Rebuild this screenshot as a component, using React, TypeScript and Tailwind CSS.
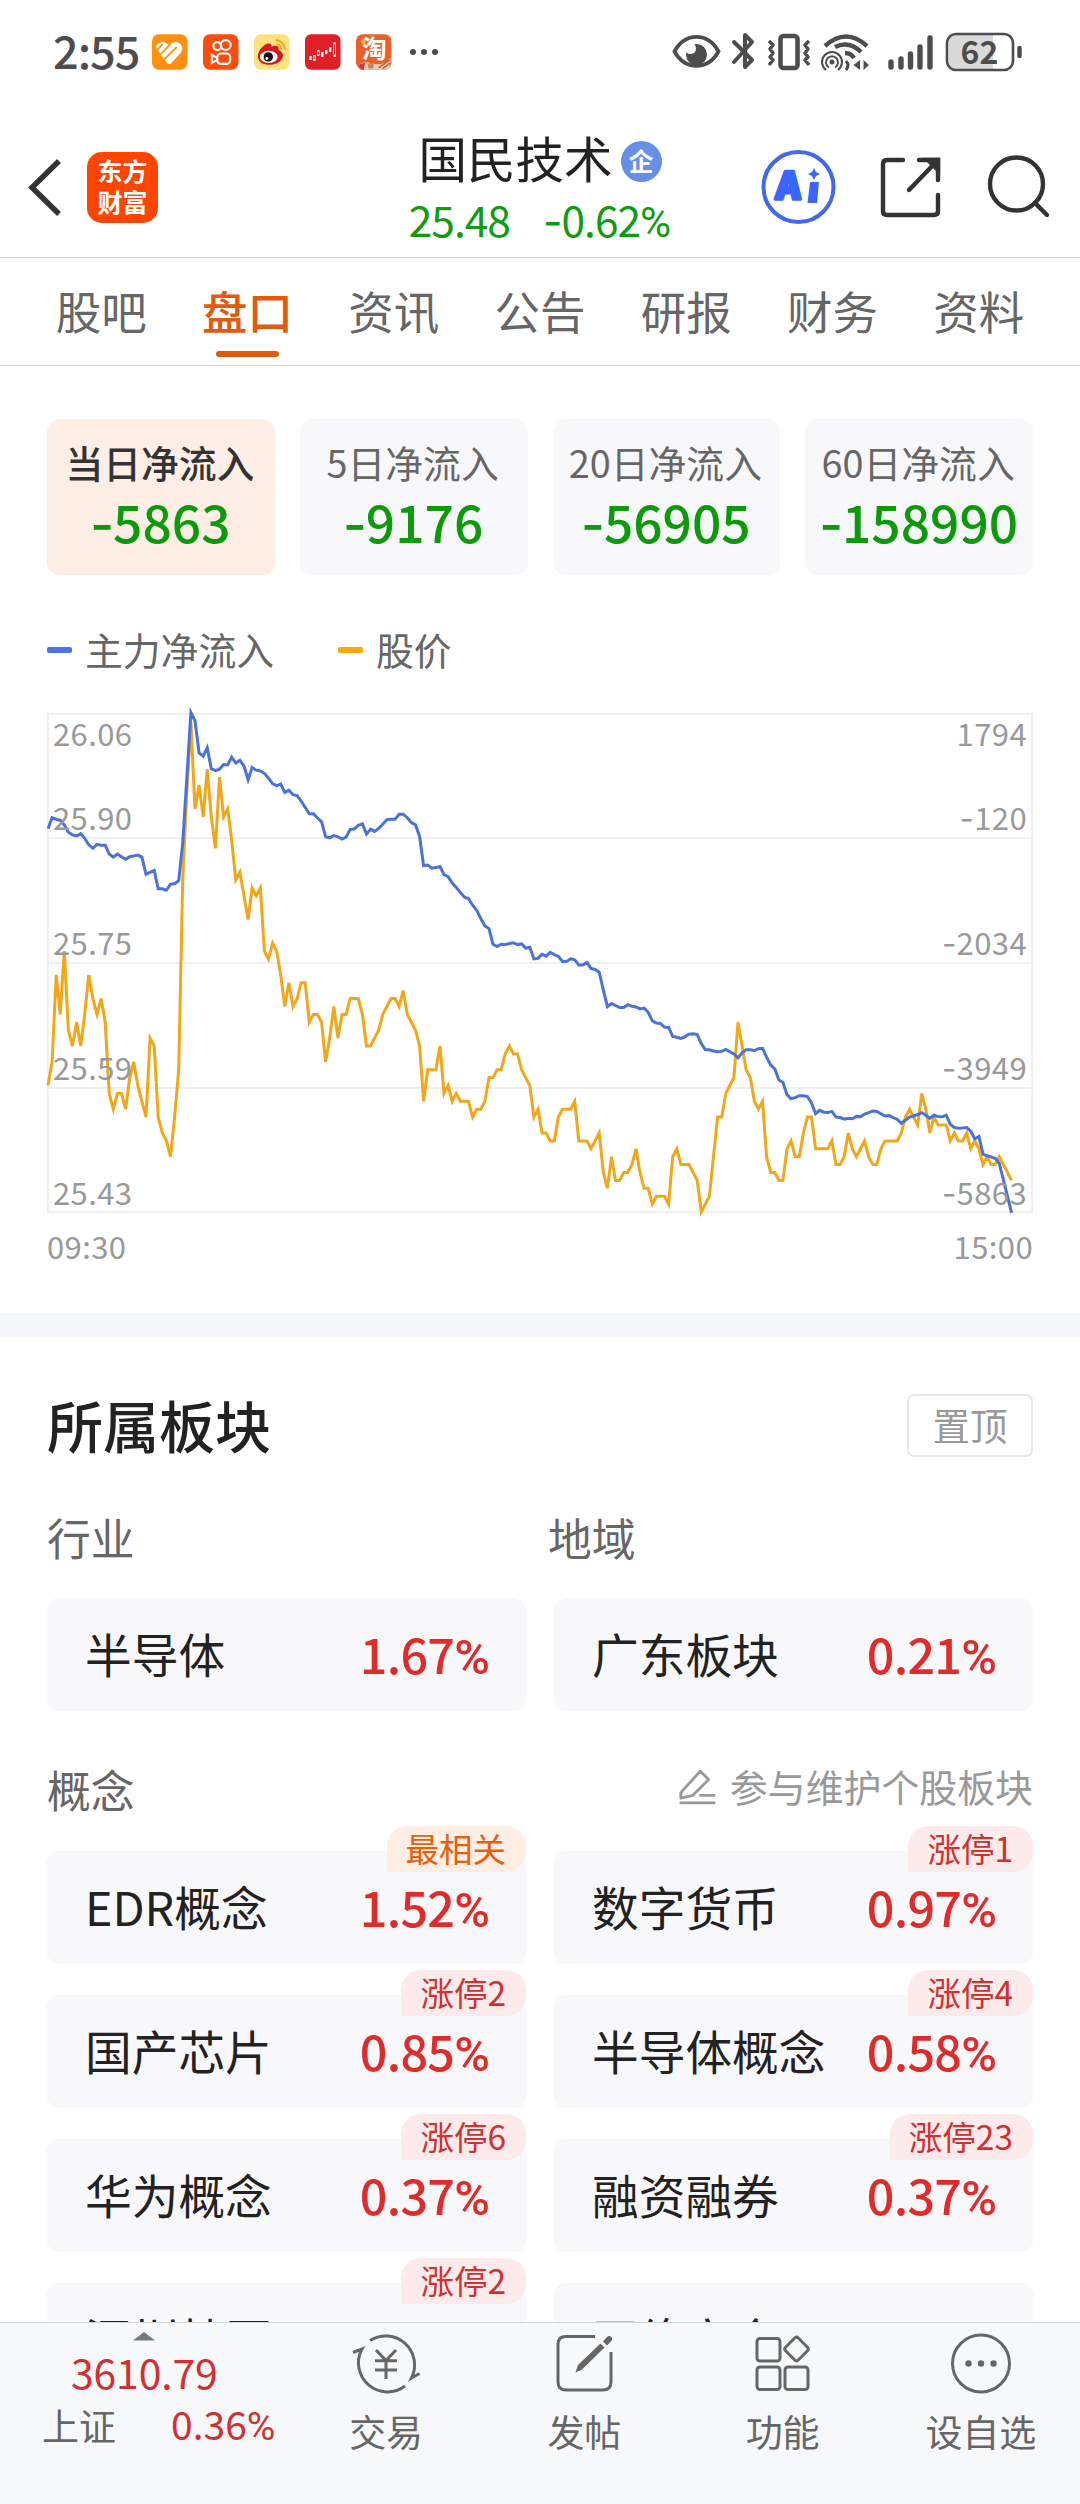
import clsx from "clsx";
import type { ReactNode } from "react";

const TABS = ["股吧", "盘口", "资讯", "公告", "研报", "财务", "资料"];
const ACTIVE_TAB = "盘口";

const FLOW_CARDS = [
  { label: "当日净流入", value: "-5863", active: true },
  { label: "5日净流入", value: "-9176" },
  { label: "20日净流入", value: "-56905" },
  { label: "60日净流入", value: "-158990" },
];

interface Sector {
  name: string;
  change?: string;
  tag?: string;
  tagTone?: "orange" | "red";
}

const CONCEPTS: Sector[] = [
  { name: "EDR概念", change: "1.52%", tag: "最相关", tagTone: "orange" },
  { name: "数字货币", change: "0.97%", tag: "涨停1" },
  { name: "国产芯片", change: "0.85%", tag: "涨停2" },
  { name: "半导体概念", change: "0.58%", tag: "涨停4" },
  { name: "华为概念", change: "0.37%", tag: "涨停6" },
  { name: "融资融券", change: "0.37%", tag: "涨停23" },
  { name: "深圳特区", tag: "涨停2" },
  { name: "网络安全" },
];

// price per minute, in 0.01 steps above 25.43
const PRICE = [
  16, 19, 30, 25, 33, 23, 21, 24, 21, 25, 30, 27, 25, 27, 24, 15, 13, 15, 15, 13,
  17, 19, 16, 14, 12, 22, 21, 12, 10, 9, 7, 12, 18, 42, 53, 62, 51, 54, 50, 56,
  50, 46, 55, 50, 51, 47, 42, 43, 40, 37, 41, 40, 41, 33, 32, 34, 33, 30, 26, 29,
  26, 27, 29, 29, 24, 25, 25, 24, 19, 22, 26, 22, 25, 25, 27, 27, 27, 25, 21, 21,
  22, 23, 25, 26, 27, 27, 26, 28, 25, 24, 23, 21, 14, 18, 18, 18, 21, 15, 16, 14,
  15, 14, 14, 14, 12, 13, 13, 14, 17, 17, 18, 18, 20, 21, 20, 20, 18, 17, 16, 12,
  13, 10, 10, 9, 9, 12, 13, 13, 13, 14, 9, 9, 9, 8, 9, 10, 5, 3, 7, 4,
  4, 5, 5, 6, 8, 5, 3, 3, 1, 2, 2, 2, 1, 7, 8, 6, 6, 6, 5, 4,
  0, 1, 2, 7, 12, 12, 15, 16, 17, 24, 21, 18, 17, 14, 13, 14, 7, 5, 5, 4,
  4, 8, 9, 7, 7, 10, 12, 12, 8, 8, 8, 8, 9, 6, 6, 7, 10, 8, 7, 8,
  9, 7, 6, 6, 8, 9, 9, 9, 9, 10, 12, 13, 12, 11, 15, 13, 10, 12, 11, 11,
  11, 9, 10, 9, 9, 10, 8, 9, 8, 6, 7, 6, 6, 7, 6, 5, 4,
];

// net inflow per minute, 62 is the top of the plot and 1364 the bottom
const FLOW_TOP = 62;
const FLOW_BOTTOM = 1364;
const FLOW = [
  362, 333, 337, 340, 352, 371, 378, 381, 375, 387, 404, 413, 403, 405, 405, 428, 436, 428, 435, 442,
  435, 433, 431, 436, 481, 476, 471, 519, 519, 523, 507, 506, 498, 400, 230, 58, 80, 164, 172, 150,
  205, 210, 206, 194, 195, 175, 190, 183, 198, 234, 202, 209, 211, 217, 230, 244, 250, 245, 267, 261,
  273, 275, 290, 306, 323, 323, 334, 344, 383, 386, 380, 383, 389, 384, 364, 363, 353, 349, 376, 363,
  369, 361, 350, 338, 337, 337, 324, 324, 333, 346, 352, 382, 459, 457, 465, 463, 461, 482, 487, 504,
  516, 529, 541, 545, 562, 575, 597, 616, 623, 664, 670, 664, 665, 662, 660, 665, 663, 674, 672, 702,
  701, 690, 695, 685, 691, 696, 709, 709, 702, 705, 718, 718, 712, 727, 730, 737, 783, 827, 819, 824,
  829, 829, 822, 826, 828, 833, 831, 842, 864, 870, 871, 881, 881, 905, 907, 910, 906, 899, 898, 900,
  924, 940, 940, 943, 945, 944, 939, 945, 951, 961, 948, 940, 940, 942, 937, 936, 959, 980, 990, 1019,
  1025, 1057, 1068, 1065, 1060, 1060, 1062, 1079, 1107, 1098, 1103, 1104, 1101, 1116, 1117, 1121, 1119, 1120, 1114, 1115,
  1108, 1104, 1100, 1101, 1107, 1113, 1112, 1117, 1122, 1132, 1124, 1116, 1113, 1109, 1104, 1111, 1119, 1111, 1114, 1115,
  1111, 1135, 1143, 1145, 1144, 1143, 1153, 1173, 1166, 1213, 1217, 1220, 1224, 1237, 1280, 1323, 1366,
];

const PLOT = { left: 48, right: 1032, top: 10, bottom: 508 };
const MINUTES = 241;

const AXIS_LABELS = [
  { y: 42, price: "26.06", flow: "1794" },
  { y: 126, price: "25.90", flow: "-120" },
  { y: 251, price: "25.75", flow: "-2034" },
  { y: 376, price: "25.59", flow: "-3949" },
  { y: 501, price: "25.43", flow: "-5863" },
];

function toPoints(values: number[], toY: (value: number) => number) {
  const step = (PLOT.right - PLOT.left) / MINUTES;
  return values
    .map((value, i) => `${(PLOT.left + i * step).toFixed(1)},${toY(value).toFixed(1)}`)
    .join(" ");
}

// the CJK face has a very short hyphen and a very wide percent sign,
// so those two are set in Inter and Roboto
function Figure({ value }: { value: string }) {
  const digits = value.replace("-", "").replace("%", "");
  return (
    <>
      {value.startsWith("-") ? <span className="font-['Inter',sans-serif] tracking-[-1px]">-</span> : null}
      {digits}
      {value.endsWith("%") ? <span className="font-['Roboto',sans-serif] tracking-normal">%</span> : null}
    </>
  );
}

function FlowChart() {
  const height = PLOT.bottom - PLOT.top;
  const pricePoints = toPoints(PRICE, (v) => PLOT.bottom - (v / 63) * height);
  const flowPoints = toPoints(
    FLOW,
    (v) => PLOT.top + ((v - FLOW_TOP) / (FLOW_BOTTOM - FLOW_TOP)) * height,
  );

  return (
    <svg width="1080" height="574" viewBox="0 0 1080 574" className="block overflow-visible">
      <g stroke="#f0f0f0" strokeWidth="2" fill="none">
        <rect x={PLOT.left} y={PLOT.top} width={PLOT.right - PLOT.left} height={height} />
        <path d="M48 134H1032M48 259H1032M48 384H1032" />
      </g>
      <polyline points={pricePoints} fill="none" stroke="#f2a71b" strokeWidth="3" />
      <polyline points={flowPoints} fill="none" stroke="#4a72d9" strokeWidth="3" />
      <g fill="#999999" fontSize="31" letterSpacing="0.4">
        {AXIS_LABELS.map((label) => (
          <g key={label.price}>
            <text x="53" y={label.y}>{label.price}</text>
            <text x="1027" y={label.y} textAnchor="end">
              {label.flow.startsWith("-") ? <tspan className="font-['Inter',sans-serif]">-</tspan> : null}
              {label.flow.replace("-", "")}
            </text>
          </g>
        ))}
        <text x="47" y="555">09:30</text>
        <text x="1033" y="555" textAnchor="end">15:00</text>
      </g>
    </svg>
  );
}

function StatusBar() {
  return (
    <div className="flex h-[105px] items-start pt-[32px] text-[#4d4d4d]">
      <div className="-mt-px ml-[53px] w-[99px] text-[45px] font-medium leading-[38px] tracking-[-1px]">2:55</div>
      <div className="flex gap-[15.5px] pt-[2px]">
        <svg width="35.5" height="36" viewBox="0 0 36 36">
          <rect width="36" height="36" rx="7" fill="#ff9010" />
          <path d="M5 15Q3 10 9 8Q13 7 17 11Q22 6 28 9Q33 13 29 19L19 30Q17 31 15 29L5 15Z" fill="#fff" />
          <path d="M3 18L11 10M8 21L19 10M12 26L25 13" stroke="#ff9010" strokeWidth="1.800" />
        </svg>
        <svg width="35.5" height="36" viewBox="0 0 36 36">
          <rect width="36" height="36" rx="7" fill="#fc4c0c" />
          <g fill="none" stroke="#fff" strokeWidth="2.2">
            <circle cx="14.500" cy="12" r="4" />
            <circle cx="23" cy="11" r="5" />
            <rect x="14.500" y="19.500" width="13" height="10.500" rx="3.500" />
            <path d="M14.500 24L9 21V29L14.500 26" />
          </g>
        </svg>
        <svg width="35.5" height="36" viewBox="0 0 36 36">
          <rect width="36" height="36" rx="7" fill="#fde27d" />
          <path d="M4 22C4 15 13 7 17 10C18 11 18 12 17.500 13C22 10.500 26 12 25 16C34 20 28 31 16 31C9 31 4 28 4 22Z" fill="#d9161c" />
          <ellipse cx="15" cy="23" rx="9" ry="6.200" fill="#fff" />
          <circle cx="14.500" cy="23" r="4.800" fill="#111" />
          <circle cx="13" cy="24.500" r="1.400" fill="#fff" />
          <path d="M22 6A9 9 0 0 1 31 16M23 10A5 5 0 0 1 27.500 15" fill="none" stroke="#f5a623" strokeWidth="2" />
        </svg>
        <svg width="35.5" height="36" viewBox="0 0 36 36">
          <rect width="36" height="36" rx="6" fill="#e01f26" />
          <path d="M5.500 22V26M9.500 21V27M13.500 16V22M17.500 18V23M21.500 16V20M25.500 13V18M30 8V23" stroke="#fff" strokeWidth="2.4" />
          <path d="M30 10V21M9.500 22.500V25M13.500 17.500V20.500" stroke="#e01f26" strokeWidth="1" />
        </svg>
        <svg width="35.5" height="36" viewBox="0 0 36 36" className="overflow-visible">
          <rect width="36" height="36" rx="7" fill="#e8602c" />
          <path d="M1 32Q8 26 18 30Q28 32 35 24V29Q35 36 29 36H7Q3 36 1 32Z" fill="#eccbb0" />
          <path d="M2 31L9 29L8 36H6Q3 35 2 31Z" fill="#d9343c" />
          <path d="M23 34L34 26M27 35L35 29" stroke="#c85a34" strokeWidth="1.500" />
          <circle cx="15" cy="32" r="3" fill="#c9825c" />
          <circle cx="7.500" cy="7.500" r="2.500" fill="#f7b733" />
          <text x="18.500" y="24" fontSize="25" fontWeight="700" textAnchor="middle" fill="#fff">淘</text>
        </svg>
      </div>
      <svg width="30" height="38" viewBox="0 0 30 38" className="ml-[17px]" fill="currentColor">
        <circle cx="4" cy="20" r="3" />
        <circle cx="15" cy="20" r="3" />
        <circle cx="26" cy="20" r="3" />
      </svg>
      <svg width="352" height="40" viewBox="672 31 352 40" className="-mt-px ml-auto mr-[56px] overflow-visible" fill="none" stroke="currentColor">
        <path d="M674.500 51.500C685 32 708 32 718.500 51.500C708 70.500 685 70.500 674.500 51.500Z" strokeWidth="3.800" />
        <circle cx="696.500" cy="54.500" r="10.500" fill="currentColor" stroke="none" />
        <circle cx="690.500" cy="48.500" r="5.500" fill="#fff" stroke="none" />
        <path d="M734 42L752 60L745 67V35L752 42L734 62" strokeWidth="4" strokeLinejoin="round" strokeLinecap="round" />
        <rect x="780.5" y="36" width="17" height="32" rx="3" strokeWidth="4.600" />
        <path d="M769 41L773 45L770 49L773 53L770 57L773 60L769 65M809 41L805 45L808 49L805 53L808 57L805 60L809 65" strokeWidth="3.500" strokeLinejoin="round" />
        <path d="M825 46Q846 27 867 46M835 47Q849 40 861 52M845 53Q851 53 854 58" strokeWidth="4.400" />
        <circle cx="832" cy="62" r="2.500" fill="currentColor" stroke="none" />
        <path d="M829 67.500A6 6 0 1 1 835 67.500M826 70A10 10 0 1 1 838 70" strokeWidth="2" />
        <path d="M846 61Q850 65 846 70" strokeWidth="3" />
        <path d="M860 60V70L853.500 65ZM863.500 60V70L869 65Z" fill="currentColor" stroke="none" />
        <path d="M891 62V67M901 59V67M910.500 54V67M920 47V67M930 38V67" strokeWidth="5.400" strokeLinecap="round" />
        <path d="M956 34H993V69H956Q949 69 949 61V42Q949 34 956 34Z" fill="#dadada" stroke="none" />
        <rect x="947" y="34" width="66" height="36" rx="9" strokeWidth="2.600" />
        <path d="M1019.500 48V56" strokeWidth="4.500" strokeLinecap="round" />
        <text x="979.5" y="63.500" fontSize="32" fontWeight="700" textAnchor="middle" fill="currentColor" stroke="none">62</text>
      </svg>
    </div>
  );
}

function Header() {
  return (
    <header className="grid h-[153px] grid-cols-[1fr_auto_1fr] border-b border-[#d4d4d4]">
      <div className="flex pt-[47px]">
        <svg width="36" height="70" viewBox="0 0 36 70" className="ml-[27px] mr-[24px]" fill="none" stroke="#333" strokeWidth="5.500">
          <path d="M32 9L5 35.500L32 62" />
        </svg>
        <div className="flex h-[71px] w-[71px] flex-col items-center justify-center rounded-[15px] bg-[#ff4500] text-[25px] font-bold leading-[31px] text-white">
          <span className="-mt-[4px]">东方</span>
          <span>财富</span>
        </div>
      </div>
      <div className="flex flex-col items-center">
        <div className="mt-[24px] flex h-[62px] items-center">
          <h1 className="-mt-[6px] text-[48.5px] leading-none text-[#222]">国民技术</h1>
          <span className="ml-[8px] mt-[3px] flex h-[41px] w-[41px] items-center justify-center rounded-full bg-[#6690e8] text-[25px] font-bold leading-none text-white">
            <span className="-mt-[3px]">企</span>
          </span>
        </div>
        <div className="flex gap-[33px] text-[42.5px] leading-[56px] tracking-[-1px] text-[#129a12]">
          <span>25.48</span>
          <span><Figure value="-0.62%" /></span>
        </div>
      </div>
      <svg width="300" height="80" viewBox="755 147 300 80" className="ml-auto mr-[25px] mt-[42px]" fill="none" stroke="#333" strokeWidth="4.400">
        <circle cx="798.500" cy="187" r="35" stroke="#4169e8" strokeWidth="4" />
        <text x="776" y="199" fontSize="37" fontWeight="900" fill="#3a66ff" stroke="#3a66ff" strokeWidth="3.500" strokeLinejoin="round" transform="skewX(-3) translate(10 0)">A</text>
        <path d="M810 182H819L817 203H807.500ZM814 168L816 172L820 174L816 176L814 180L812 176L808 174L812 172Z" fill="#3a66ff" stroke="none" />
        <path d="M903 160H887Q883 160 883 164V211Q883 215 887 215H934Q938 215 938 211V195M919 160H938V180M937 161L909 190" strokeLinecap="round" />
        <path d="M928 160H938V170Z" fill="#333" />
        <circle cx="1016.500" cy="184" r="26.500" />
        <path d="M1035 203L1047 215" strokeLinecap="round" />
      </svg>
    </header>
  );
}

function TabBar() {
  return (
    <nav className="flex h-[108px] border-b border-[#d4d4d4] px-[28px]">
      {TABS.map((tab) => {
        const active = tab === ACTIVE_TAB;
        return (
          <div key={tab} className="flex flex-1 flex-col items-center justify-between pb-[8px] pt-[25px]">
            <span className={clsx("text-[45.5px] leading-[54px]", active ? "font-medium text-[#e05a10]" : "text-[#666]")}>
              {tab}
            </span>
            {active ? <span className="h-[6px] w-[63px] rounded-full bg-[#dd5a10]" /> : null}
          </div>
        );
      })}
    </nav>
  );
}

function SectorCard({ name, change, tag, tagTone = "red" }: Sector) {
  return (
    <div className="relative flex h-[113px] items-center justify-between rounded-[12px] bg-[#f8f8fa] pl-[38px] pr-[36px]">
      <span className="-mt-[3px] whitespace-nowrap text-[46.7px] leading-none text-[#222]">{name}</span>
      {change ? (
        <span className="mt-[2px] text-[48.5px] font-medium leading-none tracking-[-0.7px] text-[#e02b2b]">
          <Figure value={change} />
        </span>
      ) : null}
      {tag ? (
        <span
          className={clsx(
            "absolute -top-[25px] right-0 flex h-[46px] items-center rounded-[20px] rounded-bl-none pb-[2px] pl-[19px] pr-[20px] text-[33.5px] leading-none",
            tagTone === "orange" ? "bg-[#feeee4] text-[#e8600e]" : "bg-[#fdeaea] text-[#d23030]",
          )}
        >
          {tag}
        </span>
      ) : null}
    </div>
  );
}

function BottomItem({ label, children }: { label: string; children: ReactNode }) {
  return (
    <div className="flex flex-1 flex-col items-center pt-[8px]">
      <svg width="70" height="64" viewBox="0 0 70 64" fill="none" stroke="#666" strokeWidth="3">
        {children}
      </svg>
      <span className="mt-[12px] text-[37px] leading-[48px] text-[#666]">{label}</span>
    </div>
  );
}

function BottomBar() {
  return (
    <footer className="flex h-[182px] border-t border-[#d0d6dc] bg-[#f7f8fa]">
      <div className="flex w-[287px] flex-col pt-[9px]">
        <svg width="22" height="9" viewBox="0 0 22 9" className="ml-[133px]">
          <path d="M0 8.500L11 0L22 8.500Z" fill="#77777c" />
        </svg>
        <span className="ml-[71px] mt-[8px] text-[41px] leading-[44px] tracking-[-0.2px] text-[#d23030]">3610.79</span>
        <div className="mt-[8px] flex items-center leading-[44px]">
          <span className="ml-[42px] text-[37px] text-[#666]">上证</span>
          <span className="ml-[55px] text-[39px] tracking-[0px] text-[#d23030]"><Figure value="0.36%" /></span>
        </div>
      </div>
      <BottomItem label="交易">
        <path d="M19 9.500A29 29 0 0 1 60.500 47L68.500 42.500M54 55A29 29 0 0 1 11 18L2 21.500" />
        <path d="M25 19L35 29.500L45 19M35 29V48M24 29.700H46M24 39H46" />
      </BottomItem>
      <BottomItem label="发帖">
        <path d="M46 5.500H17Q9 5.500 9 13V51Q9 59 17 59H54Q62 59 62 51V21" />
        <path d="M26.500 41.500L29 34L51.500 12.500L55.500 16.500L33 38.500ZM54 10.500L58 6Q60 4 62.500 6Q64 8 62 10.500L58 14.500Z" fill="#666" stroke="none" />
      </BottomItem>
      <BottomItem label="功能">
        <rect x="9" y="7.500" width="23" height="22.500" rx="3" />
        <rect x="9" y="36" width="23" height="22.500" rx="3" />
        <rect x="37" y="36" width="23" height="22.500" rx="3" />
        <rect x="39.500" y="9" width="18" height="18" rx="2.500" transform="rotate(45 48.500 18)" />
      </BottomItem>
      <BottomItem label="设自选">
        <circle cx="35" cy="32.500" r="28.500" />
        <g fill="#666" stroke="none">
          <circle cx="22.500" cy="32.500" r="3.200" />
          <circle cx="35" cy="32.500" r="3.200" />
          <circle cx="47.500" cy="32.500" r="3.200" />
        </g>
      </BottomItem>
    </footer>
  );
}

export default function App() {
  return (
    <div className="h-[2504px] w-[1080px] overflow-hidden bg-white font-['Noto_Sans_CJK_SC',sans-serif]">
      <StatusBar />
      <Header />
      <TabBar />

      <main className="h-[1956px] overflow-hidden">
        <section className="h-[947px] pt-[53px]">
          <div className="grid grid-cols-4 gap-[25px] px-[47px]">
            {FLOW_CARDS.map((card) => (
              <div
                key={card.label}
                className={clsx(
                  "flex h-[156px] flex-col items-center rounded-[13px] pt-[21px]",
                  card.active ? "bg-[#feeee6]" : "bg-[#f8f8fa]",
                )}
              >
                <span
                  className={clsx(
                    "mr-[2px] whitespace-nowrap text-[37.8px] leading-[44px]",
                    card.active ? "font-medium text-[#333]" : "text-[#666]",
                  )}
                >
                  {card.label}
                </span>
                <span className="mr-px mt-[7px] text-[51.5px] font-medium leading-[60px] text-[#0a9a0a]">
                  <Figure value={card.value} />
                </span>
              </div>
            ))}
          </div>

          <div className="mt-[50px] flex h-[50px] items-center text-[37.8px] leading-none text-[#666]">
            <span className="ml-[47px] mr-[13px] h-[6px] w-[25px] rounded-[2px] bg-[#4a72e4]" />
            <span className="-mt-[3px]">主力净流入</span>
            <span className="ml-[64px] mr-[13px] h-[6px] w-[25px] rounded-[2px] bg-[#f5a80f]" />
            <span className="-mt-[3px]">股价</span>
          </div>

          <div className="mt-[29px]">
            <FlowChart />
          </div>
        </section>

        <div className="h-[25px] bg-[#f6f7fa]" />

        <section className="px-[47px] pt-[56px]">
          <div className="flex h-[63px] items-center justify-between">
            <h2 className="-mt-[3px] text-[56px] font-medium leading-none text-[#222]">所属板块</h2>
            <span className="flex h-[63px] w-[126px] items-center justify-center rounded-[7px] border-2 border-[#e8e8e8] pb-[3px] text-[37.5px] leading-none text-[#999]">
              置顶
            </span>
          </div>

          <div className="mt-[58px] flex text-[43.8px] leading-[44px] text-[#666]">
            <span className="w-[501px]">行业</span>
            <span>地域</span>
          </div>

          <div className="mt-[39px] grid grid-cols-2 gap-x-[28px]">
            <SectorCard name="半导体" change="1.67%" />
            <SectorCard name="广东板块" change="0.21%" />
          </div>

          <div className="mt-[54px] flex h-[44px] items-center justify-between">
            <span className="mt-[5px] text-[43.8px] leading-none text-[#666]">概念</span>
            <span className="flex items-center text-[37.9px] leading-none text-[#999]">
              <svg width="39" height="40" viewBox="0 0 42 42" className="mr-[13px]" fill="none" stroke="#999" strokeWidth="3">
                <path d="M3 27L24 4L33 13L16 30L3 33Z" strokeLinejoin="round" />
                <path d="M24 30H39M3 38H39" strokeLinecap="round" />
              </svg>
              <span className="-mt-[3px]">参与维护个股板块</span>
            </span>
          </div>

          <div className="mt-[42px] grid grid-cols-2 gap-x-[28px] gap-y-[31px]">
            {CONCEPTS.map((concept) => (
              <SectorCard key={concept.name} {...concept} />
            ))}
          </div>
        </section>
      </main>

      <BottomBar />
    </div>
  );
}
